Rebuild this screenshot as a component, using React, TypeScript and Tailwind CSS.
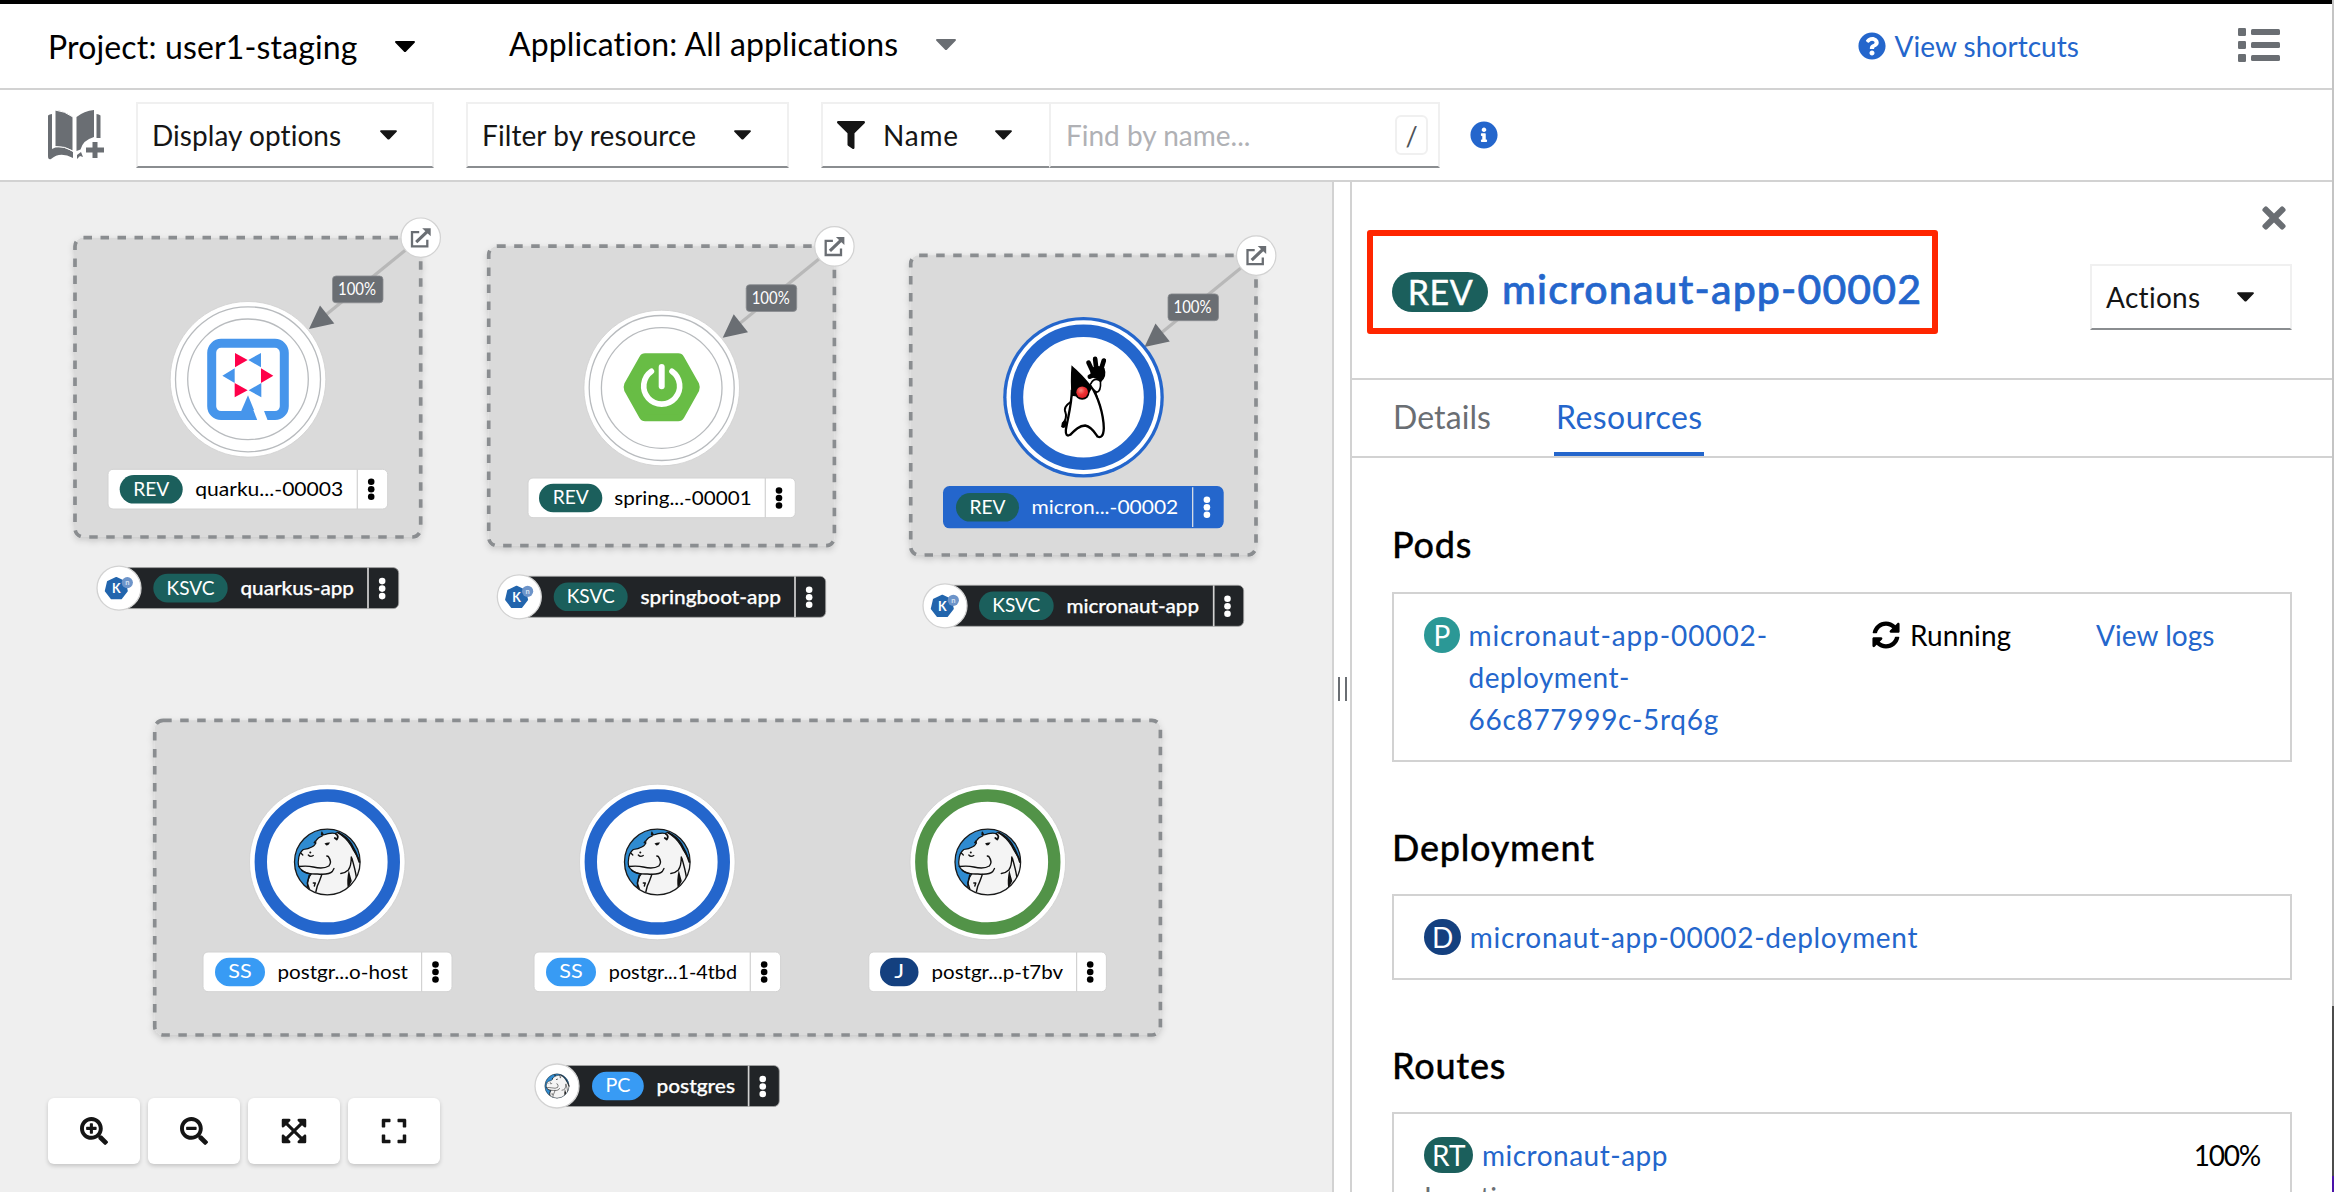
import type { ReactNode } from 'react';
import {
  FaExpand,
  FaExpandArrowsAlt,
  FaFilter,
  FaInfoCircle,
  FaQuestionCircle,
  FaSearchMinus,
  FaSearchPlus,
  FaSyncAlt,
  FaTimes,
} from 'react-icons/fa';

const TEAL = '#1b5f5c';
const SKY = '#389bf4';
const NAVY = '#14407f';
const BLUE = '#2466cc';
const GREEN = '#529348';

function Caret({ className = '' }: { className?: string }) {
  return (
    <svg viewBox="0 0 20 11" className={`shrink-0 fill-current ${className}`}>
      <path d="M1.2 0h17.6c1 0 1.500 1 .8 1.800l-8.500 8.600c-.6.700-1.600.700-2.200 0L.4 1.800C-.3 1 .2 0 1.200 0z" />
    </svg>
  );
}

/* ---------- toolbar ---------- */

function BookIcon() {
  return (
    <svg viewBox="0 0 56 50" className="h-[50px] w-14 shrink-0 fill-[#6a6e73]">
      <path d="M0 5.500Q1.500 4 4 4v35Q12 34 25 42v6Q12 41 3 49Q0 50 0 46z" />
      <path d="M52.500 5.500Q51 4 48.500 4v24h4z" />
      <path d="M7 0q10 1 18 7v34Q17 36 7 36.500z" stroke="#fff" strokeWidth="1" />
      <path d="M46 0q-10 1-17.500 7v34l4-1.500Q35 30 46 27z" />
      <path d="M29 45l4-3 2 5-3-1-3 3z" />
      <path d="M44.500 32h5v5.500H56v5h-6.500V48h-5v-5.500H38v-5h6.500z" />
    </svg>
  );
}

function ListIcon() {
  return (
    <svg viewBox="0 0 42 34" className="h-[34px] w-[42px] fill-[#6a6e73]">
      {[0, 13, 26].map((y) => (
        <g key={y}>
          <rect x="0" y={y} width="8" height="8" rx="1.200" />
          <rect x="13" y={y + 1} width="29" height="6" rx="1.500" />
        </g>
      ))}
    </svg>
  );
}

function Header() {
  return (
    <header className="flex h-[90px] shrink-0 items-center border-t-4 border-b-2 border-t-black border-b-[#d2d2d2] bg-white pl-[47px] text-[32px] leading-none text-black">
      <span className="w-[348px] pt-px pl-px tracking-[0.150px]">Project: user1-staging</span>
      <Caret className="h-[11px] w-5" />
      <span className="-mt-[5px] ml-[94px] w-[427px] tracking-[0.120px]">Application: All applications</span>
      <Caret className="-mt-1 h-[11px] w-5 text-[#6a6e73]" />
      <a className="ml-auto flex items-center gap-2 text-[28px] tracking-[0.050px] text-[#2466cc]">
        <FaQuestionCircle className="size-7" />
        View shortcuts
      </a>
      <span className="mr-[52px] -mt-0.5 ml-[159px]">
        <ListIcon />
      </span>
    </header>
  );
}

function Toolbar() {
  const box = 'flex h-[66px] items-center border-2 border-[#f0f0f0] border-b-[#8a8d90]';
  return (
    <div className="flex h-[92px] shrink-0 items-center border-b-2 border-[#d2d2d2] bg-white pl-12 text-[28px] leading-none text-[#151515]">
      <BookIcon />
      <div className={`${box} ml-8 w-[298px] justify-between pr-[35px] pl-[14px]`}>
        <span className="tracking-[0.050px]">Display options</span>
        <Caret className="h-2.5 w-[17px]" />
      </div>
      <div className={`${box} ml-8 w-[323px] justify-between pr-[36px] pl-[14px]`}>
        <span className="tracking-[0.100px]">Filter by resource</span>
        <Caret className="h-2.5 w-[17px]" />
      </div>
      <div className={`${box} ml-8 w-[228px] border-r-0 pl-[14px]`}>
        <FaFilter className="size-7" />
        <span className="ml-[18px] w-[112px] tracking-[0.800px]">Name</span>
        <Caret className="h-2.5 w-[17px]" />
      </div>
      <div className={`${box} w-[391px] justify-between pr-2.5 pl-[15px]`}>
        <span className="text-[#b0b1b5]">Find by name...</span>
        <kbd className="flex h-10 w-[33px] items-center justify-center rounded-md border-2 border-[#f0f0f0] font-[Lato] text-[27px] text-[#4f5358]">
          /
        </kbd>
      </div>
      <FaInfoCircle className="ml-[30px] size-7 text-[#2466cc]" />
    </div>
  );
}

/* ---------- topology diagram ---------- */

function Kebab({ x, y, fill }: { x: number; y: number; fill: string }) {
  return (
    <g fill={fill}>
      <circle cx={x} cy={y - 7.500} r="3.300" />
      <circle cx={x} cy={y} r="3.300" />
      <circle cx={x} cy={y + 7.500} r="3.300" />
    </g>
  );
}

interface BadgeProps {
  x: number;
  right: number;
  y: number;
  kind: string;
  kindWidth: number;
  color: string;
}

function Badge({ x, right, y, kind, kindWidth, color }: BadgeProps) {
  const mid = (x + right) / 2;
  return (
    <>
      <rect x={x} y={y} width={right - x} height="28.600" rx="14.300" fill={color} />
      <text
        x={mid - kindWidth / 2}
        y={y + 20.700}
        textLength={kindWidth}
        lengthAdjust="spacingAndGlyphs"
        fontSize="18.700"
        fill="#fff"
      >
        {kind}
      </text>
    </>
  );
}

interface LabelProps {
  x: number;
  right: number;
  y: number;
  divider: number;
  badge: Omit<BadgeProps, 'y'>;
  textX: number;
  textRight: number;
  name: string;
  selected?: boolean;
}

function NodeLabel({ x, right, y, divider, badge, textX, textRight, name, selected }: LabelProps) {
  const grow = selected ? 1.300 : 0;
  const ink = selected ? '#fff' : '#000';
  return (
    <g>
      <rect
        x={x}
        y={y - grow}
        width={right - x}
        height={39.700 + grow * 2}
        rx={selected ? 6.500 : 5}
        fill={selected ? BLUE : '#fff'}
        stroke={selected ? 'none' : '#d2d2d2'}
      />
      <line x1={divider} x2={divider} y1={y} y2={y + 39.700} stroke={selected ? '#e8e8e8' : '#d2d2d2'} strokeWidth="1.200" />
      <Badge {...badge} y={y + 5.700} />
      <text
        x={textX - 0.500}
        y={y + 26.500}
        textLength={textRight - textX + 1.500}
        lengthAdjust="spacingAndGlyphs"
        fontSize="19.800"
        fill={ink}
      >
        {name}
      </text>
      <Kebab x={(divider + right) / 2 - 1.300} y={y + 20} fill={ink} />
    </g>
  );
}

interface GroupBarProps extends Omit<LabelProps, 'selected' | 'x'> {
  cx: number;
  icon: ReactNode;
}

function GroupBar({ cx, right, y, divider, badge, textX, textRight, name, icon }: GroupBarProps) {
  return (
    <g>
      <rect x={cx} y={y} width={right - cx} height="41" rx="5.500" fill="#212427" stroke="#a5a5a5" strokeWidth="0.800" />
      <line x1={divider} x2={divider} y1={y} y2={y + 41} stroke="#d2d2d2" strokeWidth="1.700" />
      <Badge {...badge} y={y + 6.200} />
      <text
        x={textX - 0.500}
        y={y + 27.300}
        textLength={textRight - textX + 1.500}
        lengthAdjust="spacingAndGlyphs"
        fontSize="19.800"
        fontWeight="500"
        fill="#fff"
        stroke="#fff"
        strokeWidth="0.250"
      >
        {name}
      </text>
      <Kebab x={(divider + right) / 2 - 1.200} y={y + 21} fill="#fff" />
      <circle cx={cx} cy={y + 20.500} r="22" fill="#fff" stroke="#d2d2d2" strokeWidth="1.300" />
      <g transform={`translate(${cx} ${y + 20.500})`}>{icon}</g>
    </g>
  );
}

function GroupFrame({ x, y, right, bottom }: { x: number; y: number; right: number; bottom: number }) {
  return (
    <rect
      x={x}
      y={y}
      width={right - x}
      height={bottom - y}
      rx="8.500"
      fill="#dadada"
      stroke="#8a8d90"
      strokeWidth="3.700"
      strokeDasharray="8.500"
      filter="url(#frame-shadow)"
    />
  );
}

function Ring({ color }: { color?: string }) {
  return (
    <>
      <circle r="77.800" fill="#fff" stroke="#cfcfcf" strokeWidth="0.800" />
      {color ? (
        <circle r="66.500" fill="none" stroke={color} strokeWidth="12.400" />
      ) : (
        <>
          <circle r="72.500" fill="none" stroke="#b8bbbe" strokeWidth="1.300" />
          <circle r="60.300" fill="none" stroke="#b8bbbe" strokeWidth="1.300" />
        </>
      )}
    </>
  );
}

/* Traffic edge from the external route decorator to a revision node centred at the origin. */
function RouteEdge() {
  return (
    <g>
      <line x1="172.700" y1="-141.600" x2="70" y2="-58" stroke="#b8b8b8" strokeWidth="3.200" />
      <path d="M61 -50.300L72 -73.700L86.300 -55.700z" fill="#6a6e73" />
      <rect x="84.500" y="-103.300" width="50.500" height="26.800" rx="3.500" fill="#6a6e73" stroke="#8a8d90" strokeWidth="0.800" />
      <text x="90" y="-84" textLength="38" lengthAdjust="spacingAndGlyphs" fontSize="16.500" fill="#fff">
        100%
      </text>
      <g transform="translate(172.700 -141.600)">
        <circle r="19.700" fill="#fff" stroke="#d2d2d2" strokeWidth="1.200" />
        <path d="M-1.500 -5.500H-8.700V8.600H6.600V2" fill="none" stroke="#6a6e73" strokeWidth="2.300" />
        <path d="M-4.500 4.500L6.500 -6" fill="none" stroke="#6a6e73" strokeWidth="3.200" />
        <path d="M1.500 -9.500H10V-1.500z" fill="#6a6e73" />
      </g>
    </g>
  );
}

function QuarkusLogo() {
  return (
    <g transform="scale(0.333) translate(-594 -508)">
      <rect x="485" y="400" width="218" height="217" rx="28" fill="#fff" stroke="#4695eb" strokeWidth="27" />
      <path d="M594 556L624 630H562z" fill="#4695eb" />
      <path d="M610 600L641 600L655 636H624z" fill="#fff" />
      <path d="M555 429L593 450L555 472zM633 475L670 497L633 519zM554 519L593 541L554 562z" fill="#ff004a" />
      <path d="M633 429L595 450L633 472zM554 475L517 497L554 519zM634 519L596 541L634 562z" fill="#4695eb" />
    </g>
  );
}

function SpringLogo() {
  return (
    <g transform="scale(0.333) translate(-575 -534)">
      <path
        d="M525 440H625Q630 440 633 445L678 525Q681 532 678 539L633 619Q630 624 625 624H525Q520 624 517 619L472 539Q469 532 472 525L517 445Q520 440 525 440z"
        fill="#68bd45"
        stroke="#68bd45"
        strokeWidth="20"
        strokeLinejoin="round"
      />
      <path d="M544 484A54 54 0 1 0 606 484" fill="none" stroke="#fff" strokeWidth="17" strokeLinecap="round" />
      <path d="M575 471V529" stroke="#fff" strokeWidth="18" strokeLinecap="round" />
    </g>
  );
}

function DukeLogo() {
  return (
    <g transform="scale(0.333) translate(-580 -562)">
      <path
        d="M543 575C528 586 520 594 526 608C530 618 526 630 519 642"
        fill="none"
        stroke="#000"
        strokeWidth="6"
        strokeLinecap="round"
      />
      <path d="M515 639Q524 628 528 635Q531 646 524 653Q516 657 513 650z" />
      <path
        d="M545 540C545 585 533 622 527 660C526 675 530 680 540 675C555 660 566 648 585 647C604 650 614 668 622 680C632 685 640 680 641 655C640 612 624 560 602 528"
        fill="#fff"
        stroke="#000"
        strokeWidth="7"
        strokeLinejoin="round"
      />
      <path d="M603 520C610 504 626 507 631 515C632 530 630 545 620 547C611 543 605 533 600 524z" fill="#fff" stroke="#000" strokeWidth="5" />
      <path d="M544 466C562 482 590 508 606 532C600 548 590 560 575 563C560 562 550 555 544 560C542 530 541 498 544 466z" />
      <circle cx="576" cy="548" r="22" fill="#000" />
      <circle cx="576" cy="547" r="17.500" fill="url(#duke-nose)" />
      <path
        d="M595 458L608 486M615 447L619 482M641 452L631 484M599 500L614 494"
        fill="none"
        stroke="#000"
        strokeWidth="14"
        strokeLinecap="round"
      />
      <path d="M602 476Q620 462 643 474Q652 500 632 517Q620 503 600 503z" />
      <path d="M618 545L627 575L634 594L626 578L610 545z" />
    </g>
  );
}

function HippoLogo({ scale = 1 }: { scale?: number }) {
  return (
    <g transform={`scale(${scale})`} strokeLinecap="round" strokeLinejoin="round">
      <circle r="32.800" fill="#2f8bd0" />
      <g clipPath="url(#hippo-clip)">
        <path
          d="M-5.500 -30L-3.800 -27Q3 -29.500 8 -28.500L11 -30L14 -27Q22 -21 26 -12Q30 -5 34 0V34H-17L-20 25Q-20 17 -16 12Q-23 11 -25.500 8Q-30 5 -28.800 -2Q-28.500 -9 -24 -12.500Q-19 -13 -15.500 -15Q-11 -17 -11.500 -21Q-9 -25 -5 -26z"
          fill="#f4f4f4"
          stroke="#111"
          strokeWidth="1.200"
        />
        <g fill="none" stroke="#111" strokeWidth="1.400">
          <path d="M-28.500 4.500Q-20 3.500 -14 5Q-4 7.500 1.500 4Q5 0 1 -5.500L-0.500 -6" />
          <path d="M-25.500 8.500Q-20 12.500 -10 12Q2 13 5 9.500L6.700 6.500" />
          <path d="M-5.500 12.500Q-8 20 -10 24L-11.500 30M-18 13L-20 21L-18 27M-14 21H-12L-13 24" />
          <path d="M24 -5Q24 4 21 8Q18 11 13.500 11.500M24.500 -4Q28 8 29 15" />
          <path d="M8.500 -28Q12 -26 9.500 -22.500L7.500 -24M11 -29Q19 -26 24 -18Q29 -10 32 0" strokeWidth="1.800" />
          <path d="M-26.500 -9L-24.500 -7M-19 -7Q-17 -4.500 -14 -6.500" strokeWidth="1.300" />
        </g>
        <path d="M21.500 8Q23 14 24.500 19L20.500 27Q19 18 21.500 8zM-6 -30L-4 -26.500L-6.500 -27zM-12 -22l-2 3 3 1z" fill="#111" />
        <path d="M-2.800 -18.500Q0 -20 2.800 -19.500Q1.500 -16.500 -1 -16.500z" fill="#111" />
        <circle cx="-17" cy="-9.500" r="1" fill="#111" />
      </g>
      <circle r="32.800" fill="none" stroke="#1a1a1a" strokeWidth="1.300" />
    </g>
  );
}

function KnativeLogo() {
  return (
    <g transform="translate(-2.700 0.300)">
      <path
        d="M0 -10.500L8.500 -6.500L10.600 2.500L4.800 10H-4.800L-10.600 2.500L-8.500 -6.500z"
        fill="#2265ad"
        stroke="#2265ad"
        strokeWidth="1.800"
        strokeLinejoin="round"
      />
      <circle cx="11" cy="-5.800" r="5.600" fill="#6d94c9" />
      <text x="0" y="4.600" textAnchor="middle" fontSize="12.500" fontWeight="700" fill="#fff">
        K
      </text>
      <text x="11" y="-3.600" textAnchor="middle" fontSize="7.500" fontWeight="700" fill="#d5e2f3">
        n
      </text>
    </g>
  );
}

function Topology() {
  return (
    <svg viewBox="0 182 1332 1010" className="h-[1010px] w-[1332px]">
      <defs>
        <filter id="frame-shadow" x="-5%" y="-5%" width="110%" height="112%">
          <feDropShadow dx="0" dy="3" stdDeviation="3" floodColor="#000" floodOpacity="0.160" />
        </filter>
        <radialGradient id="duke-nose" cx="0.400" cy="0.350" r="0.700">
          <stop offset="0" stopColor="#f58a80" />
          <stop offset="0.500" stopColor="#ee3134" />
          <stop offset="1" stopColor="#d81f26" />
        </radialGradient>
        <clipPath id="hippo-clip">
          <circle r="32.800" />
        </clipPath>
      </defs>

      <GroupFrame x={75} y={237.700} right={420.700} bottom={537} />
      <g transform="translate(248 379.300)">
        <RouteEdge />
        <Ring />
        <QuarkusLogo />
      </g>
      <NodeLabel
        x={108}
        right={387.700}
        y={469.300}
        divider={357.300}
        badge={{ x: 119.700, right: 182.700, kind: 'REV', kindWidth: 36, color: TEAL }}
        textX={195.700}
        textRight={342.300}
        name="quarku...-00003"
      />
      <GroupBar
        cx={119}
        right={398.700}
        y={567.600}
        divider={368}
        badge={{ x: 153.300, right: 227.700, kind: 'KSVC', kindWidth: 48, color: TEAL }}
        textX={241}
        textRight={353}
        name="quarkus-app"
        icon={<KnativeLogo />}
      />

      <GroupFrame x={488.700} y={246.200} right={834.400} bottom={545.700} />
      <g transform="translate(661.700 388)">
        <RouteEdge />
        <Ring />
        <SpringLogo />
      </g>
      <NodeLabel
        x={528}
        right={795.300}
        y={478}
        divider={765.300}
        badge={{ x: 539, right: 602.300, kind: 'REV', kindWidth: 36, color: TEAL }}
        textX={614.700}
        textRight={750.700}
        name="spring...-00001"
      />
      <GroupBar
        cx={519.300}
        right={825.700}
        y={576.300}
        divider={795}
        badge={{ x: 553.700, right: 627.700, kind: 'KSVC', kindWidth: 48, color: TEAL }}
        textX={641}
        textRight={780}
        name="springboot-app"
        icon={<KnativeLogo />}
      />

      <GroupFrame x={910.700} y={255.300} right={1256} bottom={555} />
      <g transform="translate(1083.500 397.200)">
        <RouteEdge />
        <circle r="80.300" fill={BLUE} />
        <circle r="77" fill="#fff" />
        <circle r="66.500" fill="none" stroke={BLUE} strokeWidth="12.400" />
        <DukeLogo />
      </g>
      <NodeLabel
        x={943}
        right={1223.700}
        y={487.300}
        divider={1192.700}
        badge={{ x: 956, right: 1019, kind: 'REV', kindWidth: 36, color: TEAL }}
        textX={1032}
        textRight={1177.300}
        name="micron...-00002"
        selected
      />
      <GroupBar
        cx={945}
        right={1243.700}
        y={585.300}
        divider={1213.700}
        badge={{ x: 979, right: 1053.700, kind: 'KSVC', kindWidth: 48, color: TEAL }}
        textX={1067}
        textRight={1198}
        name="micronaut-app"
        icon={<KnativeLogo />}
      />

      <GroupFrame x={154.700} y={720.300} right={1160.400} bottom={1035} />
      {[
        { cx: 327.300, color: BLUE },
        { cx: 657.300, color: BLUE },
        { cx: 987.800, color: GREEN },
      ].map(({ cx, color }) => (
        <g key={cx} transform={`translate(${cx} 862)`}>
          <Ring color={color} />
          <HippoLogo />
        </g>
      ))}
      <NodeLabel
        x={203}
        right={452}
        y={952}
        divider={421.600}
        badge={{ x: 215, right: 265, kind: 'SS', kindWidth: 23.500, color: SKY }}
        textX={278}
        textRight={407}
        name="postgr...o-host"
      />
      <NodeLabel
        x={534}
        right={780.600}
        y={952}
        divider={750.300}
        badge={{ x: 546, right: 596, kind: 'SS', kindWidth: 23.500, color: SKY }}
        textX={609.300}
        textRight={736}
        name="postgr...1-4tbd"
      />
      <NodeLabel
        x={868.800}
        right={1106.400}
        y={952}
        divider={1076.600}
        badge={{ x: 880, right: 918.500, kind: 'J', kindWidth: 10, color: NAVY }}
        textX={932}
        textRight={1062}
        name="postgr...p-t7bv"
      />
      <GroupBar
        cx={557}
        right={779.300}
        y={1065.500}
        divider={748.600}
        badge={{ x: 592, right: 643.800, kind: 'PC', kindWidth: 25, color: SKY }}
        textX={657}
        textRight={734}
        name="postgres"
        icon={<HippoLogo scale={0.370} />}
      />
    </svg>
  );
}

function ControlButton({ children }: { children: ReactNode }) {
  return (
    <button className="flex h-[66px] w-[92px] items-center justify-center rounded-md bg-white text-[28px] text-[#151515] shadow-[0_2px_4px_rgba(0,0,0,0.180)]">
      {children}
    </button>
  );
}

/* ---------- side panel ---------- */

function ResourceLink({ kind, color, children }: { kind: string; color: string; children: ReactNode }) {
  return (
    <div className="flex items-start leading-[42px]">
      <span className={`mt-[3px] mr-[8.500px] flex h-9 min-w-9 items-center justify-center rounded-full px-[8px] leading-none text-white ${color}`}>
        {kind}
      </span>
      <a className="text-[#2466cc]">{children}</a>
    </div>
  );
}

function SectionTitle({ children }: { children: ReactNode }) {
  return (
    <h2 className="text-[36px] leading-[48px] font-medium tracking-[0.750px] [-webkit-text-stroke:0.300px_currentColor]">
      {children}
    </h2>
  );
}

function SidePanel() {
  return (
    <aside className="flex min-w-0 flex-1 flex-col overflow-hidden border-l-2 border-[#d2d2d2] bg-white text-[28px] text-black">
      <div className="flex h-[198px] shrink-0 justify-between border-b-2 border-[#d2d2d2] pr-10">
        <div className="mt-12 ml-[15px] flex h-[104px] w-[571px] items-center rounded-[3px] border-[6px] border-[#ff2600] pt-4 pl-[19px]">
          <span className="mt-1 flex h-10 w-24 items-center justify-center rounded-full bg-[#1b5f5c] pl-px text-[34px] leading-none tracking-[0.500px] text-white [-webkit-text-stroke:0.400px_currentColor]">
            REV
          </span>
          <h1 className="-mt-[3px] ml-3.5 text-[41px] leading-none font-medium tracking-[1.150px] text-[#2466cc] [-webkit-text-stroke:0.700px_currentColor]">
            micronaut-app-00002
          </h1>
        </div>
        <div className="flex flex-col items-end pt-[19px]">
          <FaTimes className="mr-px h-[34px] w-[34px] text-[#6a6e73]" />
          <button className="mt-[29px] flex h-[66px] w-[202px] items-center justify-between border-2 border-[#f0f0f0] border-b-[#8a8d90] pr-[36px] pl-[14px] leading-none tracking-[0.300px] text-[#151515]">
            Actions
            <Caret className="h-2.5 w-[17px]" />
          </button>
        </div>
      </div>
      <nav className="flex h-[78px] shrink-0 border-b-2 border-[#d2d2d2] pl-[41px] text-[32px] leading-[73px]">
        <a className="w-[161px] tracking-[0.100px] text-[#6a6e73]">Details</a>
        <a className="h-[76px] border-b-4 border-[#2466cc] pr-px pl-0.5 tracking-[0.450px] text-[#2466cc]">Resources</a>
      </nav>

      <div className="flex flex-col px-10 pt-[62px]">
        <SectionTitle>Pods</SectionTitle>
        <div className="mt-6 grid h-[170px] shrink-0 grid-cols-[448px_224px_1fr] border-2 border-[#d2d2d2] pt-[20px] pl-[30px] leading-[42px]">
          <ResourceLink kind="P" color="bg-[#2b9896]">
            <span className="tracking-[0.900px]">micronaut-app-00002-</span>
            <br />
            <span className="tracking-[0.450px]">deployment-</span>
            <br />
            <span className="tracking-[0.700px]">66c877999c-5rq6g</span>
          </ResourceLink>
          <div className="flex h-[42px] items-center gap-2.5">
            <FaSyncAlt className="size-7" />
            <span className="tracking-[0.070px]">Running</span>
          </div>
          <a className="tracking-[0.050px] text-[#2466cc]">View logs</a>
        </div>

        <div className="mt-[61px]">
          <SectionTitle>Deployment</SectionTitle>
        </div>
        <div className="mt-[23px] flex h-[86px] shrink-0 border-2 border-[#d2d2d2] pt-5 pl-[30px]">
          <ResourceLink kind="D" color="bg-[#14407f]">
            <span className="tracking-[0.700px]">micronaut-app-00002-deployment</span>
          </ResourceLink>
        </div>

        <div className="mt-[61px]">
          <SectionTitle>Routes</SectionTitle>
        </div>
        <div className="mt-[23px] h-[150px] shrink-0 border-2 border-[#d2d2d2] px-[30px] pt-5 leading-[42px]">
          <div className="flex justify-between">
            <ResourceLink kind="RT" color="bg-[#1b5f5c]">
              <span className="tracking-[0.500px]">micronaut-app</span>
            </ResourceLink>
            <span className="tracking-[-1.200px]">100%</span>
          </div>
          <div className="text-[#6a6e73]">Location:</div>
        </div>
      </div>
    </aside>
  );
}

export default function App() {
  return (
    <div className="flex h-[1192px] w-[2334px] overflow-hidden bg-white font-[Lato,sans-serif] [font-variant-ligatures:none]">
      <div className="flex min-w-0 flex-1 flex-col">
        <Header />
        <Toolbar />
        <div className="flex h-[1010px]">
          <main className="relative w-[1332px] shrink-0 bg-[#efefef]">
            <Topology />
            <div className="absolute bottom-7 left-12 flex gap-2">
              <ControlButton>
                <FaSearchPlus />
              </ControlButton>
              <ControlButton>
                <FaSearchMinus />
              </ControlButton>
              <ControlButton>
                <FaExpandArrowsAlt />
              </ControlButton>
              <ControlButton>
                <FaExpand />
              </ControlButton>
            </div>
          </main>
          <div className="flex w-[18px] shrink-0 items-center justify-center gap-[5px] border-l-2 border-[#d2d2d2] bg-white">
            <span className="mt-1 h-6 w-0.5 bg-[#6a6e73]" />
            <span className="mt-1 h-6 w-0.5 bg-[#6a6e73]" />
          </div>
          <SidePanel />
        </div>
      </div>
      <div className="flex w-0.5 flex-col">
        <div className="h-[1006px] bg-[#c4c4c4]" />
        <div className="h-[170px] bg-[#4c4c4c]" />
        <div className="flex-1 bg-[#4a12a8]" />
      </div>
    </div>
  );
}
